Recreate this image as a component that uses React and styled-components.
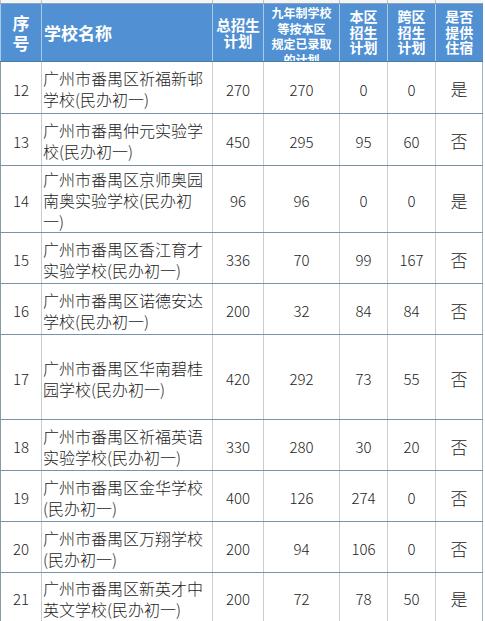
import React from 'react';
import styled, { createGlobalStyle } from 'styled-components';

const GlobalStyle = createGlobalStyle`
  html, body {
    margin: 0;
    padding: 0;
    background: #ffffff;
  }
  body {
    font-family: "Noto Sans CJK SC", "DejaVu Sans", sans-serif;
  }
`;

const cols = [41, 171, 51, 76, 48, 48, 47];

const rows = [
  { no: 12, name: ['广州市番禺区祈福新邨', '学校(民办初一)'], total: 270, nine: 270, local: 0, cross: 0, stay: '是', h: 52 },
  { no: 13, name: ['广州市番禺仲元实验学', '校(民办初一)'], total: 450, nine: 295, local: 95, cross: 60, stay: '否', h: 52 },
  { no: 14, name: ['广州市番禺区京师奥园', '南奥实验学校(民办初', '一)'], total: 96, nine: 96, local: 0, cross: 0, stay: '是', h: 63 },
  { no: 15, name: ['广州市番禺区香江育才', '实验学校(民办初一)'], total: 336, nine: 70, local: 99, cross: 167, stay: '否', h: 51 },
  { no: 16, name: ['广州市番禺区诺德安达', '学校(民办初一)'], total: 200, nine: 32, local: 84, cross: 84, stay: '否', h: 51 },
  { no: 17, name: ['广州市番禺区华南碧桂', '园学校(民办初一)'], total: 420, nine: 292, local: 73, cross: 55, stay: '否', h: 85 },
  { no: 18, name: ['广州市番禺区祈福英语', '实验学校(民办初一)'], total: 330, nine: 280, local: 30, cross: 20, stay: '否', h: 51 },
  { no: 19, name: ['广州市番禺区金华学校', '(民办初一)'], total: 400, nine: 126, local: 274, cross: 0, stay: '否', h: 51 },
  { no: 20, name: ['广州市番禺区万翔学校', '(民办初一)'], total: 200, nine: 94, local: 106, cross: 0, stay: '否', h: 51 },
  { no: 21, name: ['广州市番禺区新英才中', '英文学校(民办初一)'], total: 200, nine: 72, local: 78, cross: 50, stay: '是', h: 49 },
];

const Sheet = styled.div`
  width: 485px;
  height: 621px;
  overflow: hidden;
  background: #ffffff;
`;

const Table = styled.table`
  border-collapse: collapse;
  table-layout: fixed;
  width: 482px;
`;

const StripRow = styled.tr`
  height: 3px;
`;

const StripCell = styled.td`
  padding: 0;
  height: 3px;
  border-left: 1px solid #b9c2c8;
  border-bottom: 1px solid #8fa3b3;
  background: #f3f5f6;
`;

const HeadRow = styled.tr`
  height: 57px;
  background: #5090d3;
`;

const HeadCell = styled.th`
  padding: 0;
  height: 57px;
  overflow: hidden;
  color: #ffffff;
  font-weight: 700;
  font-size: ${(p) => p.$size || 14}px;
  line-height: ${(p) => p.$lh || 15.5}px;
  text-align: ${(p) => (p.$left ? 'left' : 'center')};
  padding-left: ${(p) => (p.$left ? '2px' : '0')};
  vertical-align: ${(p) => (p.$top ? 'top' : 'middle')};
  border-left: 1px solid #a9cbe9;
  border-bottom: 1px solid #4a7f9c;
`;

const Clip = styled.div`
  height: 57px;
  overflow: hidden;
  padding-top: 1px;
  box-sizing: border-box;
`;

const BodyRow = styled.tr`
  height: ${(p) => p.$h}px;
`;

const Cell = styled.td`
  padding: 0;
  padding-top: 3px;
  color: #1c1c1c;
  font-size: 15px;
  line-height: 21px;
  font-weight: 300;
  text-align: center;
  vertical-align: middle;
  border-left: 1px solid #c6ced3;
  border-bottom: 1px solid #7892a6;
  border-right: ${(p) => (p.$last ? '1px solid #9fb0bd' : 'none')};
  &:first-child {
    border-left: 1px solid #8a9aa6;
  }
`;

const NameCell = styled(Cell)`
  text-align: left;
  padding-left: 1px;
  font-size: 16px;
  white-space: nowrap;
  overflow: hidden;
`;

const Line = styled.div`
  height: 21px;
`;

const Mark = styled.span`
  font-size: 17px;
`;

export default function App() {
  return (
    <Sheet>
      <GlobalStyle />
      <Table>
        <colgroup>
          {cols.map((w, i) => (
            <col key={i} style={{ width: w }} />
          ))}
        </colgroup>
        <tbody>
          <StripRow>
            {cols.map((w, i) => (
              <StripCell key={i} />
            ))}
          </StripRow>
          <HeadRow>
            <HeadCell $size={17} $lh={20}>序<br />号</HeadCell>
            <HeadCell $size={17} $left>学校名称</HeadCell>
            <HeadCell $size={14.5} $lh={16}>总招生<br />计划</HeadCell>
            <HeadCell $size={12} $lh={15.5} $top>
              <Clip>九年制学校<br />等按本区<br />规定已录取<br />的计划</Clip>
            </HeadCell>
            <HeadCell>本区<br />招生<br />计划</HeadCell>
            <HeadCell>跨区<br />招生<br />计划</HeadCell>
            <HeadCell>是否<br />提供<br />住宿</HeadCell>
          </HeadRow>
          {rows.map((r) => (
            <BodyRow key={r.no} $h={r.h}>
              <Cell>{r.no}</Cell>
              <NameCell>
                {r.name.map((l, i) => (
                  <Line key={i}>{l}</Line>
                ))}
              </NameCell>
              <Cell>{r.total}</Cell>
              <Cell>{r.nine}</Cell>
              <Cell>{r.local}</Cell>
              <Cell>{r.cross}</Cell>
              <Cell $last>
                <Mark>{r.stay}</Mark>
              </Cell>
            </BodyRow>
          ))}
        </tbody>
      </Table>
    </Sheet>
  );
}
